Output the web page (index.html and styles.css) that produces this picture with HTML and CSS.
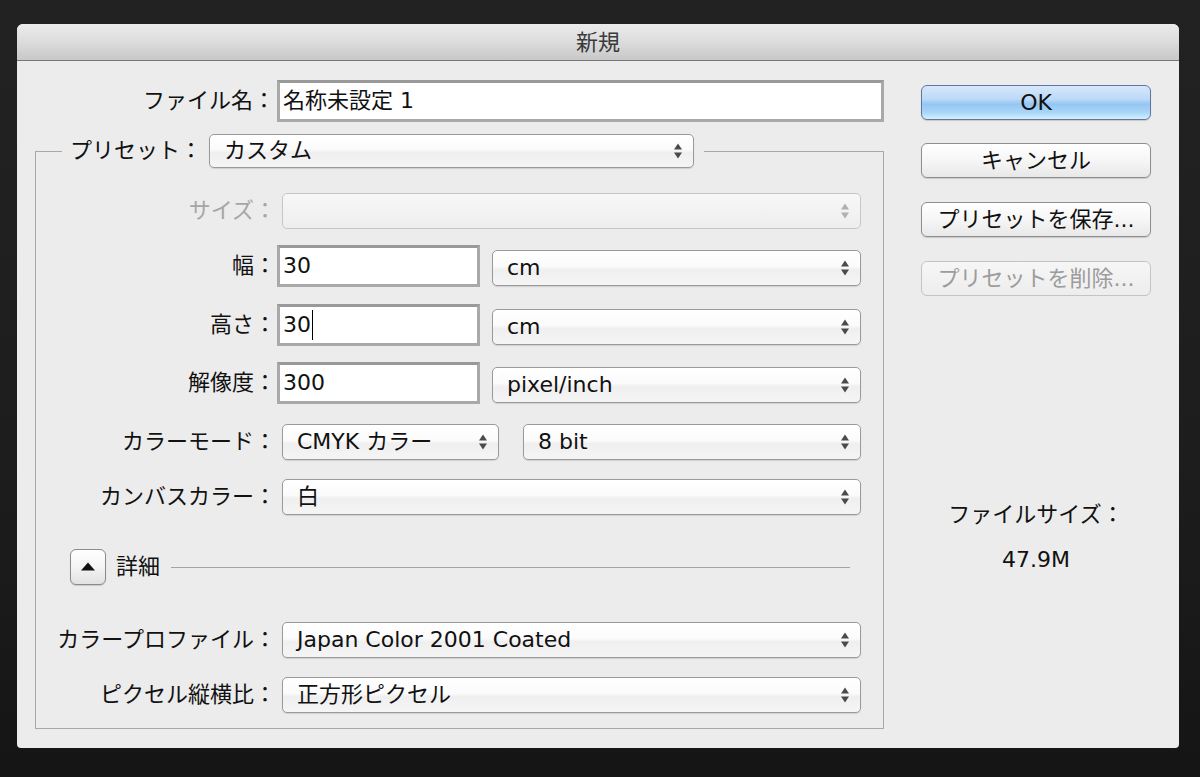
FILE: index.html
```html
<!DOCTYPE html>
<html lang="ja">
<head>
<meta charset="utf-8">
<title>新規</title>
<link rel="stylesheet" href="styles.css">
</head>
<body>
<div class="dialog">
  <div class="titlebar">新規</div>
  <div class="body">
    <div class="main">
      <div class="file-row">
        <span class="lbl">ファイル名：</span>
        <div class="input input-wide">名称未設定 1</div>
      </div>
      <div class="group">
        <div class="group-head">
          <span class="seg seg-l"></span>
          <span class="head-lbl">プリセット：</span>
          <div class="select select-preset"><span>カスタム</span><svg class="arr" width="8" height="16" viewBox="0 0 8 16"><polygon points="0,6.5 4,0.5 8,6.5"/><polygon points="0,9.5 8,9.5 4,15.5"/></svg></div>
          <span class="seg seg-r"></span>
        </div>
        <div class="group-box">
          <div class="frow r-size">
            <span class="lbl lbl-dis">サイズ：</span>
            <div class="select select-dis sel-full"><span></span><svg class="arr" width="8" height="16" viewBox="0 0 8 16"><polygon points="0,6.5 4,0.5 8,6.5"/><polygon points="0,9.5 8,9.5 4,15.5"/></svg></div>
          </div>
          <div class="frow r-w">
            <span class="lbl">幅：</span>
            <div class="input input-num">30</div>
            <div class="select sel-unit"><span>cm</span><svg class="arr" width="8" height="16" viewBox="0 0 8 16"><polygon points="0,6.5 4,0.5 8,6.5"/><polygon points="0,9.5 8,9.5 4,15.5"/></svg></div>
          </div>
          <div class="frow r-h">
            <span class="lbl">高さ：</span>
            <div class="input input-num">30<span class="caret"></span></div>
            <div class="select sel-unit"><span>cm</span><svg class="arr" width="8" height="16" viewBox="0 0 8 16"><polygon points="0,6.5 4,0.5 8,6.5"/><polygon points="0,9.5 8,9.5 4,15.5"/></svg></div>
          </div>
          <div class="frow r-res">
            <span class="lbl">解像度：</span>
            <div class="input input-num">300</div>
            <div class="select sel-unit"><span>pixel/inch</span><svg class="arr" width="8" height="16" viewBox="0 0 8 16"><polygon points="0,6.5 4,0.5 8,6.5"/><polygon points="0,9.5 8,9.5 4,15.5"/></svg></div>
          </div>
          <div class="frow r-mode">
            <span class="lbl">カラーモード：</span>
            <div class="select sel-mode"><span>CMYK カラー</span><svg class="arr" width="8" height="16" viewBox="0 0 8 16"><polygon points="0,6.5 4,0.5 8,6.5"/><polygon points="0,9.5 8,9.5 4,15.5"/></svg></div>
            <div class="select sel-bit"><span>8 bit</span><svg class="arr" width="8" height="16" viewBox="0 0 8 16"><polygon points="0,6.5 4,0.5 8,6.5"/><polygon points="0,9.5 8,9.5 4,15.5"/></svg></div>
          </div>
          <div class="frow r-canvas">
            <span class="lbl">カンバスカラー：</span>
            <div class="select sel-full"><span>白</span><svg class="arr" width="8" height="16" viewBox="0 0 8 16"><polygon points="0,6.5 4,0.5 8,6.5"/><polygon points="0,9.5 8,9.5 4,15.5"/></svg></div>
          </div>
          <div class="frow r-detail">
            <div class="disc-btn"><svg width="14" height="9" viewBox="0 0 14 9"><polygon points="0,8.5 7,0.5 14,8.5"/></svg></div>
            <span class="detail-lbl">詳細</span>
            <span class="detail-line"></span>
          </div>
          <div class="frow r-profile">
            <span class="lbl">カラープロファイル：</span>
            <div class="select sel-full"><span>Japan Color 2001 Coated</span><svg class="arr" width="8" height="16" viewBox="0 0 8 16"><polygon points="0,6.5 4,0.5 8,6.5"/><polygon points="0,9.5 8,9.5 4,15.5"/></svg></div>
          </div>
          <div class="frow r-pixel">
            <span class="lbl">ピクセル縦横比：</span>
            <div class="select sel-full"><span>正方形ピクセル</span><svg class="arr" width="8" height="16" viewBox="0 0 8 16"><polygon points="0,6.5 4,0.5 8,6.5"/><polygon points="0,9.5 8,9.5 4,15.5"/></svg></div>
          </div>
        </div>
      </div>
    </div>
    <div class="side">
      <div class="btn btn-ok">OK</div>
      <div class="btn btn-cancel">キャンセル</div>
      <div class="btn btn-save">プリセットを保存...</div>
      <div class="btn btn-del btn-dis">プリセットを削除...</div>
      <div class="fs-lbl">ファイルサイズ：</div>
      <div class="fs-val">47.9M</div>
    </div>
  </div>
</div>
</body>
</html>
```
FILE: styles.css
```css
html, body {
  margin: 0;
  padding: 0;
}
body {
  width: 1200px;
  height: 777px;
  overflow: hidden;
  background: linear-gradient(#222222 0%, #1d1d1d 60%, #151515 100%);
  font-family: "DejaVu Sans", "Noto Sans CJK JP", sans-serif;
  font-size: 22px;
  color: #111;
}
.dialog {
  margin: 24px 0 0 17px;
  width: 1162px;
  height: 724px;
  background: #ececec;
  border-radius: 6px 6px 4px 4px;
  display: flex;
  flex-direction: column;
  overflow: hidden;
}
.titlebar {
  height: 36px;
  line-height: 38px;
  border-bottom: 1px solid #777;
  background: linear-gradient(#ebebeb 0%, #dcdcdc 50%, #c8c8c8 100%);
  text-align: center;
  font-size: 22px;
  color: #3a3a3a;
  flex: none;
}
.body {
  flex: 1;
  display: flex;
}
.main {
  width: 849px;
  padding-left: 18px;
  flex: none;
}
.lbl {
  width: 240px;
  flex: none;
  text-align: right;
  white-space: nowrap;
  line-height: 30px;
}
.lbl-dis {
  color: #a6a6a6;
}
.file-row {
  margin-top: 19px;
  display: flex;
  align-items: center;
  height: 42px;
}
.input {
  height: 42px;
  box-sizing: border-box;
  border: 3px solid #a9a9a9;
  border-top-color: #999;
  background: #fff;
  padding-left: 3px;
  display: flex;
  align-items: center;
  line-height: 30px;
  flex: none;
}
.input-wide {
  flex: 1;
  margin-left: 2px;
}
.input-num {
  width: 203px;
  margin-left: 1px;
}
.caret {
  display: inline-block;
  width: 1px;
  height: 30px;
  background: #000;
  margin-left: 1px;
}
.group {
  margin-top: 12px;
}
.group-head {
  display: flex;
  height: 34px;
}
.seg {
  align-self: flex-end;
  height: 17px;
  box-sizing: border-box;
  border-top: 1px solid #a8a8a8;
}
.seg-l {
  width: 27px;
  border-left: 1px solid #a8a8a8;
  flex: none;
}
.seg-r {
  flex: 1;
  margin-left: 10px;
  border-right: 1px solid #a8a8a8;
}
.head-lbl {
  margin-left: 8px;
  line-height: 34px;
  white-space: nowrap;
}
.select {
  height: 36px;
  box-sizing: border-box;
  border: 1px solid #9a9a9a;
  border-radius: 5px;
  background: linear-gradient(#ffffff 0%, #fbfbfb 45%, #efefef 55%, #f5f5f5 100%);
  box-shadow: 0 1px 1px rgba(0, 0, 0, 0.12);
  display: flex;
  align-items: center;
  justify-content: space-between;
  padding: 0 11px 0 14px;
  line-height: 30px;
  white-space: nowrap;
  flex: none;
}
.arr {
  fill: #4a4a4a;
  flex: none;
}
.select-preset {
  width: 485px;
  margin-left: 7px;
  height: 34px;
}
.select-dis {
  border-color: #c6c6c6;
  background: linear-gradient(#f7f7f7, #eeeeee);
  box-shadow: none;
}
.select-dis .arr {
  fill: #b0b0b0;
}
.group-box {
  display: flow-root;
  border: 1px solid #a8a8a8;
  border-top: none;
  padding: 0 22px 12px 0;
}
.frow {
  display: flex;
  align-items: center;
  height: 42px;
}
.sel-full {
  flex: 1;
  margin-left: 6px;
}
.sel-unit {
  flex: 1;
  margin-left: 12px;
  align-self: flex-end;
  margin-bottom: 1px;
}
.sel-mode {
  width: 217px;
  margin-left: 6px;
}
.sel-bit {
  flex: 1;
  margin-left: 24px;
}
.r-size { margin-top: 22px; }
.r-w { margin-top: 13px; }
.r-h { margin-top: 17px; }
.r-res { margin-top: 16px; }
.r-mode { margin-top: 17px; }
.r-canvas { margin-top: 13px; }
.r-detail { margin-top: 28px; }
.r-profile { margin-top: 31px; }
.r-pixel { margin-top: 13px; }
.disc-btn {
  width: 36px;
  height: 36px;
  box-sizing: border-box;
  margin-left: 34px;
  border: 1px solid #8a8a8a;
  border-radius: 6px;
  background: linear-gradient(#ffffff 0%, #f4f4f4 50%, #e2e2e2 100%);
  box-shadow: 0 1px 1px rgba(0, 0, 0, 0.15);
  display: flex;
  align-items: center;
  justify-content: center;
  flex: none;
}
.disc-btn svg {
  fill: #111;
  margin-top: -2px;
}
.detail-lbl {
  margin-left: 10px;
  line-height: 30px;
}
.detail-line {
  flex: 1;
  height: 1px;
  background: #a4a4a4;
  margin: 0 11px 0 11px;
}
.side {
  flex: 1;
  padding: 0 28px 0 37px;
}
.btn {
  height: 35px;
  box-sizing: border-box;
  border: 1px solid #8e8e8e;
  border-radius: 6px;
  background: linear-gradient(#ffffff 0%, #f6f6f6 50%, #e8e8e8 100%);
  box-shadow: 0 1px 1px rgba(0, 0, 0, 0.15);
  display: flex;
  align-items: center;
  justify-content: center;
  line-height: 30px;
  white-space: nowrap;
}
.btn-ok {
  margin-top: 24px;
  border-color: #6374a4;
  background: linear-gradient(#d6e8fb 0%, #bcd9f7 40%, #95c6f3 55%, #a8d6f8 80%, #d4efff 100%);
}
.btn-cancel { margin-top: 23px; }
.btn-save { margin-top: 24px; }
.btn-del { margin-top: 24px; }
.btn-dis {
  color: #9c9c9c;
  border-color: #c4c4c4;
  background: linear-gradient(#f6f6f6, #ededed);
  box-shadow: none;
}
.fs-lbl {
  margin-top: 204px;
  text-align: center;
  line-height: 30px;
}
.fs-val {
  margin-top: 15px;
  text-align: center;
  line-height: 30px;
}
```
